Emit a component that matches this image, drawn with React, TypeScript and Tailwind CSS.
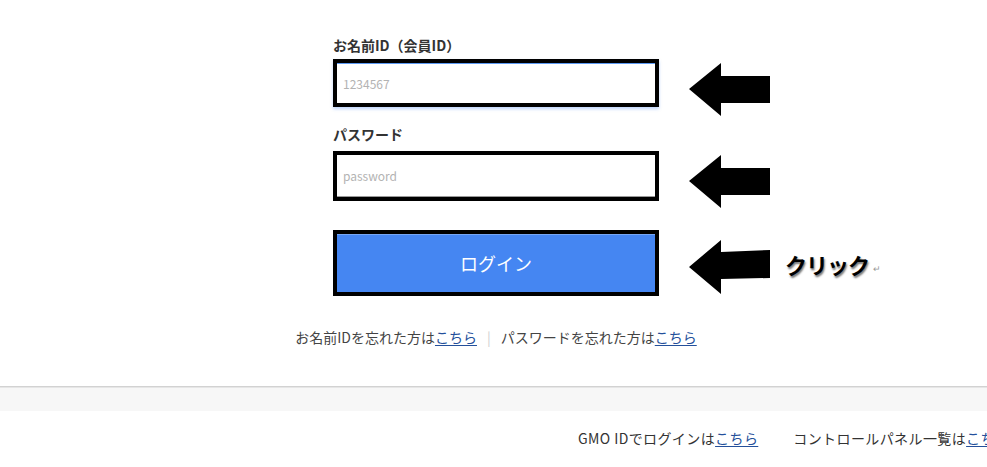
import type { ReactNode } from "react"

const font = { fontFamily: '"Noto Sans CJK JP", "Noto Sans", sans-serif' }

function Arrow({ tilt = false }: { tilt?: boolean }) {
  const points = tilt
    ? "1,28 33,1 33,13 82,11 82,39 33,40 33,55"
    : "1,27 33,1 33,14 82,14 82,41 33,41 33,54"
  return (
    <svg width="83" height="56" viewBox="0 0 83 56" className="shrink-0">
      <polygon points={points} fill="#000" />
    </svg>
  )
}

function FieldBox({ children, className = "" }: { children: ReactNode; className?: string }) {
  return (
    <div className={`relative border-4 border-black ${className}`}>
      {children}
      <div className="absolute left-[calc(100%+33px)] top-[-1px]">
        <Arrow />
      </div>
    </div>
  )
}

function Link({ children }: { children: ReactNode }) {
  return <a className="text-[#24509b] underline underline-offset-2">{children}</a>
}

export default function App() {
  return (
    <div className="min-h-[467px] bg-white text-[#333]" style={font}>
      {/* login form */}
      <section className="flex flex-col items-center pl-[5px] pt-[35px] pb-[39px] border-b border-[#d2d2d2]">
        <div className="w-[326px]">
          <label className="block text-[14px] font-bold leading-[20px] mb-[4px]">お名前ID（会員ID）</label>
          <FieldBox className="h-[48px] shadow-[0_2px_3px_rgba(66,133,244,0.35)]">
            <input
              className="h-full w-full border-t border-[#5d9af3] bg-white px-[6px] text-[12px] outline-none placeholder:text-[#b3b3b3]"
              placeholder="1234567"
            />
          </FieldBox>

          <label className="block text-[14px] font-bold leading-[20px] mt-[17px] mb-[7px]">パスワード</label>
          <FieldBox className="h-[50px]">
            <input
              type="password"
              className="h-full w-full border-b border-[#999] bg-white px-[6px] text-[12px] outline-none placeholder:text-[#b3b3b3]"
              placeholder="password"
            />
          </FieldBox>

          <div className="relative mt-[29px] h-[66px] border-4 border-black">
            <button className="h-full w-full border-t border-[#76a7f6] bg-[#4586f2] text-[18px] text-white">
              ログイン
            </button>
            <div className="absolute left-[calc(100%+33px)] top-[5px] flex items-center whitespace-nowrap">
              <Arrow tilt />
              <span className="ml-[14px] mt-[-6px] text-[22px] font-bold leading-none tracking-[-1px] text-black [text-shadow:1px_2px_2px_rgba(0,0,0,0.55)]">
                クリック
              </span>
              <span className="ml-[4px] mt-[4px] text-[9px] text-[#999]">↵</span>
            </div>
          </div>
        </div>

        <p className="mt-[31px] text-[14px] leading-[20px] whitespace-nowrap text-[#444]">
          お名前IDを忘れた方は<Link>こちら</Link>
          <span className="mx-[10px] text-[#d0d0d0]">|</span>
          パスワードを忘れた方は<Link>こちら</Link>
        </p>
      </section>

      {/* grey band */}
      <div className="h-[24px] bg-[#f7f7f7] border-t border-[#e6e6e6]" />

      {/* footer links */}
      <footer className="overflow-hidden whitespace-nowrap pl-[578px] pt-[17px] text-[14px] leading-[20px] tracking-[0.4px] text-[#333]">
        <span>GMO IDでログインは<Link>こちら</Link></span>
        <span className="ml-[35px]">コントロールパネル一覧は<Link>こちら</Link></span>
      </footer>
    </div>
  )
}
